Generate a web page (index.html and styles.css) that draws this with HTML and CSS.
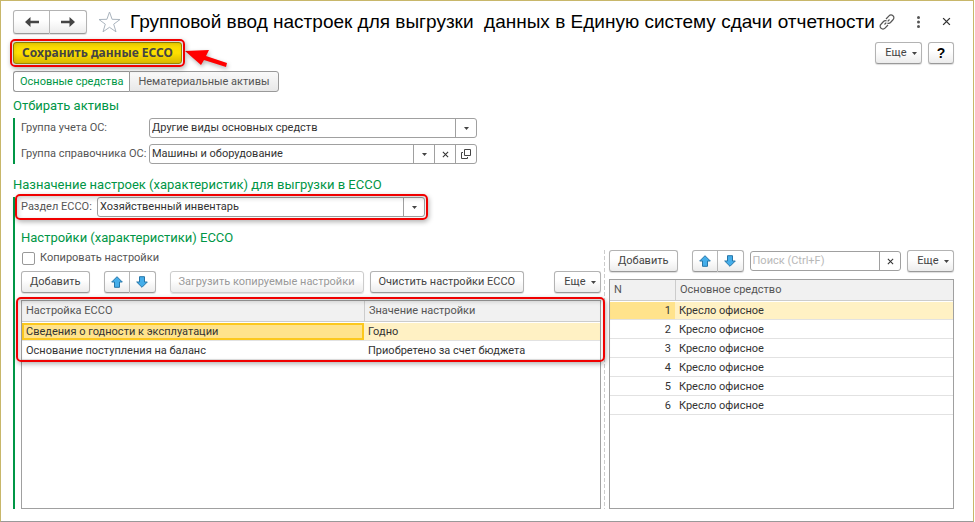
FILE: index.html
```
<!DOCTYPE html>
<html lang="ru">
<head>
    <meta charset="UTF-8">
    <meta name="viewport" content="width=device-width, initial-scale=1.0">
    <title>Групповой ввод настроек для выгрузки данных в ЕССО</title>
    <link rel="stylesheet" href="styles.css">
</head>
<body>
    <!-- Shared icons -->
    <svg class="sprite" aria-hidden="true">
        <symbol id="caret" viewBox="0 0 5 3"><path d="M0 0h5L2.5 3z"/></symbol>
        <symbol id="cross" viewBox="0 0 8 8"><path d="M1 1l6 6M7 1l-6 6" fill="none" stroke="currentColor" stroke-width="1.2"/></symbol>
        <symbol id="up" viewBox="0 0 12 12"><path d="M6 .7L11.3 6H8.5v5.3h-5V6H.7z" fill="#45aeea" stroke="#2676a8"/></symbol>
        <symbol id="down" viewBox="0 0 12 12"><path d="M6 11.3L.7 6h2.8V.7h5V6h2.8z" fill="#45aeea" stroke="#2676a8"/></symbol>
    </svg>

    <div class="window">
        <header class="titlebar">
            <div class="btn-group nav">
                <button class="btn" aria-label="Назад"><svg width="14" height="10" viewBox="0 0 14 10"><path d="M5.500 0v3.700H14v2.600H5.500V10L0 5z"/></svg></button>
                <button class="btn" aria-label="Вперед"><svg width="14" height="10" viewBox="0 0 14 10"><path d="M8.500 0v3.700H0v2.600h8.500V10L14 5z"/></svg></button>
            </div>
            <button class="icon-btn star" aria-label="В избранное"><svg width="23" height="22" viewBox="0 0 23 22"><path d="M11.500 1l2.600 7.300 7.900.2-6.300 4.700 2.300 7.600-6.500-4.500L5 20.800l2.300-7.600L1 8.500l7.900-.2z" fill="none" stroke="#aab4be"/></svg></button>
            <h1>Групповой ввод настроек для выгрузки&nbsp; данных в Единую систему сдачи отчетности</h1>
            <div class="title-tools">
                <button class="icon-btn" aria-label="Ссылка"><svg width="16" height="16" viewBox="0 0 16 16"><path d="M7 5l3-3.200a2.700 2.700 0 0 1 4 0 2.700 2.700 0 0 1 0 4L11.500 8.500a2.700 2.700 0 0 1-3 .6M9 11l-3 3.200a2.700 2.700 0 0 1-4 0 2.700 2.700 0 0 1 0-4L4.500 7.500a2.700 2.700 0 0 1 3-.6M5.500 10.500l1.800-1.800M8.700 7.300L10.500 5.500" fill="none" stroke="#555" stroke-width="1.200"/></svg></button>
                <button class="icon-btn" aria-label="Меню"><svg width="3" height="12" viewBox="0 0 3 12" fill="#555"><circle cx="1.500" cy="1.500" r="1.500" fill="#555"/><circle cx="1.500" cy="6" r="1.500" fill="#555"/><circle cx="1.500" cy="10.500" r="1.500" fill="#555"/></svg></button>
                <button class="icon-btn" aria-label="Закрыть"><svg width="9" height="9"><use href="#cross"/></svg></button>
            </div>
        </header>

        <div class="commands">
            <div class="marked marked-save">
                <button class="btn btn-primary">Сохранить данные ЕССО</button>
                <svg class="pointer" width="48" height="24" viewBox="0 0 48 24"><path d="M3 5l24-1-3 6 21 7-1 4-22-7-3 5z" fill="#f00"/></svg>
            </div>
            <div class="commands-right">
                <button class="btn more">Еще <svg width="5" height="3"><use href="#caret"/></svg></button>
                <button class="btn help">?</button>
            </div>
        </div>

        <nav class="tabs">
            <button class="tab active">Основные средства</button>
            <button class="tab">Нематериальные активы</button>
        </nav>

        <h2>Отбирать активы</h2>
        <section class="group filters">
            <label for="acc-group">Группа учета ОС:</label>
            <div class="combo">
                <div class="combo-select">
                    <select id="acc-group"><option>Другие виды основных средств</option></select>
                    <span class="combo-arrow"><svg width="5" height="3"><use href="#caret"/></svg></span>
                </div>
            </div>
            <label for="ref-group">Группа справочника ОС:</label>
            <div class="combo">
                <div class="combo-select">
                    <select id="ref-group"><option>Машины и оборудование</option></select>
                    <span class="combo-arrow"><svg width="5" height="3"><use href="#caret"/></svg></span>
                </div>
                <button class="combo-btn" aria-label="Очистить"><svg width="7" height="7"><use href="#cross"/></svg></button>
                <button class="combo-btn" aria-label="Открыть"><svg width="10" height="10" viewBox="0 0 10 10"><path d="M3.500.5h6v6h-6zM2 3.500H.500v6h6V8" fill="none" stroke="#444"/></svg></button>
            </div>
        </section>

        <h2 class="second">Назначение настроек (характеристик) для выгрузки в ЕССО</h2>
        <section class="group settings">
            <div class="marked section-row">
                <label for="section">Раздел ЕССО:</label>
                <div class="combo">
                    <div class="combo-select">
                        <select id="section"><option>Хозяйственный инвентарь</option></select>
                        <span class="combo-arrow"><svg width="5" height="3"><use href="#caret"/></svg></span>
                    </div>
                </div>
            </div>
            <h2>Настройки (характеристики) ЕССО</h2>

            <div class="panes">
                <div class="pane">
                    <div class="check-row">
                        <input type="checkbox" id="copy">
                        <label for="copy">Копировать настройки</label>
                    </div>
                    <div class="toolbar">
                        <button class="btn">Добавить</button>
                        <div class="btn-group arrows">
                            <button class="btn" aria-label="Вверх"><svg width="12" height="12"><use href="#up"/></svg></button>
                            <button class="btn" aria-label="Вниз"><svg width="12" height="12"><use href="#down"/></svg></button>
                        </div>
                        <button class="btn load" disabled>Загрузить копируемые настройки</button>
                        <button class="btn">Очистить настройки ЕССО</button>
                        <button class="btn more">Еще <svg width="5" height="3"><use href="#caret"/></svg></button>
                    </div>
                    <div class="grid-box">
                        <div class="marked marked-table">
                            <table class="grid">
                                <colgroup><col class="col-name"><col></colgroup>
                                <thead><tr><th>Настройка ЕССО</th><th>Значение настройки</th></tr></thead>
                                <tbody>
                                    <tr class="selected"><td class="current framed">Сведения о годности к эксплуатации</td><td>Годно</td></tr>
                                    <tr><td>Основание поступления на баланс</td><td>Приобретено за счет бюджета</td></tr>
                                </tbody>
                            </table>
                        </div>
                    </div>
                </div>

                <div class="splitter"></div>

                <div class="pane">
                    <div class="toolbar">
                        <button class="btn">Добавить</button>
                        <div class="btn-group arrows">
                            <button class="btn" aria-label="Вверх"><svg width="12" height="12"><use href="#up"/></svg></button>
                            <button class="btn" aria-label="Вниз"><svg width="12" height="12"><use href="#down"/></svg></button>
                        </div>
                        <div class="combo search">
                            <input type="text" placeholder="Поиск (Ctrl+F)" aria-label="Поиск">
                            <button class="combo-btn" aria-label="Очистить поиск"><svg width="7" height="7"><use href="#cross"/></svg></button>
                        </div>
                        <button class="btn more">Еще <svg width="5" height="3"><use href="#caret"/></svg></button>
                    </div>
                    <div class="grid-box">
                        <table class="grid">
                            <colgroup><col class="col-num"><col></colgroup>
                            <thead><tr><th>N</th><th>Основное средство</th></tr></thead>
                            <tbody>
                                <tr class="selected"><td class="num current">1</td><td>Кресло офисное</td></tr>
                                <tr><td class="num">2</td><td>Кресло офисное</td></tr>
                                <tr><td class="num">3</td><td>Кресло офисное</td></tr>
                                <tr><td class="num">4</td><td>Кресло офисное</td></tr>
                                <tr><td class="num">5</td><td>Кресло офисное</td></tr>
                                <tr><td class="num">6</td><td>Кресло офисное</td></tr>
                            </tbody>
                        </table>
                    </div>
                </div>
            </div>
        </section>
    </div>
</body>
</html>
```
FILE: styles.css
```
* {
    box-sizing: border-box;
}

body {
    margin: 0;
    background: #fff;
    color: #333;
    font: 11px/16px Roboto, "Liberation Sans", sans-serif;
}

button, input, select {
    margin: 0;
    font: inherit;
    color: inherit;
}

svg {
    display: block;
    flex: none;
    fill: #444;
}

.sprite {
    position: absolute;
    width: 0;
    height: 0;
}

.window {
    display: flex;
    flex-direction: column;
    min-height: 100vh;
    margin-right: 1px;
    padding: 8px 19px 12px 12px;
    border: 1px solid #c8b76a;
    border-bottom-color: #999;
}

/* Title */
.titlebar {
    display: flex;
    align-items: center;
    height: 25px;
}

h1 {
    margin: 0 0 0 9px;
    color: #000;
    font: 19px/24px "Liberation Sans", Arial, sans-serif;
    white-space: nowrap;
}

.icon-btn {
    padding: 0;
    border: 0;
    background: none;
}

.star {
    margin-left: 11px;
}

.title-tools {
    display: flex;
    align-items: center;
    gap: 22px;
    margin-left: auto;
    margin-right: 3px;
}

/* Buttons */
.btn {
    display: flex;
    align-items: center;
    justify-content: center;
    height: 22px;
    padding: 0 8px;
    border: 1px solid #b3b3b3;
    border-bottom-color: #999;
    border-radius: 3px;
    background: linear-gradient(#fff 40%, #ececec);
    color: #444;
    white-space: nowrap;
    box-shadow: 0 1px 1px #ddd;
}

.btn:disabled {
    border-color: #ccc;
    color: #999;
}

.btn-group {
    display: flex;
}

.btn-group .btn {
    width: 26px;
    padding: 0;
}

.btn-group .btn:first-child {
    border-radius: 3px 0 0 3px;
}

.btn-group .btn:last-child {
    border-left: 0;
    border-radius: 0 3px 3px 0;
}

.nav .btn {
    width: 37px;
    height: 24px;
}

.btn.more {
    flex: none;
    gap: 5px;
    width: 47px;
    padding: 0 0 0 5px;
}

/* Command bar */
.commands {
    display: flex;
    justify-content: space-between;
    align-items: center;
    margin-top: 8px;
}

.commands-right {
    display: flex;
    gap: 6px;
}

.help {
    width: 26px;
    padding: 0;
    color: #000;
    font: bold 14px/16px "Liberation Sans", Arial, sans-serif;
}

.btn-primary {
    border-color: #9c8a00;
    background: linear-gradient(#f7d800, #ffe000 50%, #d8b800);
    color: #444;
    font: bold 12px/16px "Noto Sans", sans-serif;
}

/* Red frames over the parts to look at */
.marked {
    position: relative;
}

.marked::after {
    content: "";
    position: absolute;
    inset: -3px;
    border: 2px solid #f00000;
    border-radius: 5px;
    box-shadow: 1px 2px 5px rgba(0, 0, 0, 0.3), inset 1px 2px 5px rgba(0, 0, 0, 0.2);
    pointer-events: none;
}

.pointer {
    position: absolute;
    left: 100%;
    top: 4px;
    filter: drop-shadow(1px 2px 2px rgba(0, 0, 0, 0.3));
}

/* Tabs */
.tabs {
    display: flex;
    margin-top: 7px;
}

.tab {
    height: 21px;
    padding: 0 8px;
    border: 1px solid #999;
    border-radius: 0 3px 3px 0;
    background: linear-gradient(#fafafa, #e8e8e8);
    color: #555;
}

.tab.active {
    padding: 0 6px;
    border-right: 0;
    border-radius: 3px 0 0 3px;
    background: #fff;
    color: #009646;
}

/* Groups */
h2 {
    margin: 5px 0 3px;
    color: #009646;
    font-size: 13px;
    font-weight: normal;
    line-height: 18px;
}

h2.second {
    margin-top: 12px;
}

.group {
    padding-left: 6px;
    border-left: 2px solid #009646;
}

label {
    color: #555;
    white-space: nowrap;
}

.filters {
    display: grid;
    grid-template-columns: 122px 328px;
    gap: 6px;
    align-items: center;
}

.settings {
    display: flex;
    flex: 1;
    flex-direction: column;
}

.section-row {
    display: flex;
    align-items: center;
    align-self: flex-start;
}

.section-row::after {
    left: -6px;
}

.section-row label {
    width: 76px;
}

.section-row .combo {
    width: 328px;
}

.settings h2 {
    margin: 12px 0 3px;
}

/* Fields */
.combo {
    display: flex;
    height: 20px;
    border: 1px solid #a0a0a0;
    border-radius: 3px;
    background: #fff;
}

.combo-select {
    position: relative;
    flex: 1;
}

.combo select {
    display: block;
    appearance: none;
    width: 100%;
    height: 18px;
    padding: 0 24px 0 2px;
    border: 0;
    background: none;
}

.combo-arrow {
    position: absolute;
    top: 0;
    right: 0;
    display: flex;
    align-items: center;
    justify-content: center;
    width: 21px;
    height: 18px;
    border-left: 1px solid #a0a0a0;
    pointer-events: none;
}

.combo-btn {
    display: flex;
    flex: none;
    align-items: center;
    justify-content: center;
    width: 21px;
    padding: 0;
    border: 0;
    border-left: 1px solid #a0a0a0;
    background: none;
}

.combo input {
    flex: 1;
    min-width: 0;
    padding: 0 2px;
    border: 0;
    background: none;
}

.combo input::placeholder {
    color: #b8b8b8;
}

/* Panes */
.panes {
    display: grid;
    flex: 1;
    grid-template-columns: 580fr 8px 345fr;
}

.pane {
    display: flex;
    flex-direction: column;
    min-width: 0;
}

.splitter {
    width: 1px;
    margin-left: 3px;
    background: repeating-linear-gradient(#ccc 0 4px, #fff 4px 6px);
}

.check-row {
    display: flex;
    align-items: center;
    gap: 5px;
    height: 16px;
    margin-bottom: 5px;
}

.check-row input {
    appearance: none;
    width: 13px;
    height: 13px;
    margin-left: 1px;
    border: 1px solid #999;
    border-radius: 2px;
}

.toolbar {
    display: flex;
    align-items: center;
    gap: 6px;
    margin-bottom: 7px;
}

.arrows {
    margin-left: 8px;
}

.load {
    margin-left: 8px;
}

.toolbar .more {
    margin-left: auto;
}

.search {
    flex: 1;
    min-width: 0;
}

/* Tables */
.grid-box {
    flex: 1;
    border: 1px solid #a0a0a0;
}

.marked-table::after {
    inset: -4px -5px -2px -6px;
}

.grid {
    width: 100%;
    table-layout: fixed;
    border-collapse: separate;
    border-spacing: 0;
}

.col-name {
    width: 342px;
}

.col-num {
    width: 65px;
}

.grid th {
    height: 21px;
    padding: 0 4px;
    border-bottom: 1px solid #ccc;
    background: #f1f1f1;
    color: #555;
    font-weight: normal;
    text-align: left;
}

.grid th + th {
    border-left: 1px solid #ccc;
}

.grid td {
    height: 19px;
    padding: 0 4px;
    border-top: 1px solid #fff;
    border-bottom: 1px solid #e2e2e2;
    line-height: 15px;
}

.grid .selected td {
    background: #fff1c4;
    background-clip: padding-box;
}

.grid .selected .current {
    background-color: #ffe38c;
}

.grid .selected .framed {
    box-shadow: inset 0 0 0 2px #fcc81e;
}

.grid .num {
    text-align: right;
}
```
